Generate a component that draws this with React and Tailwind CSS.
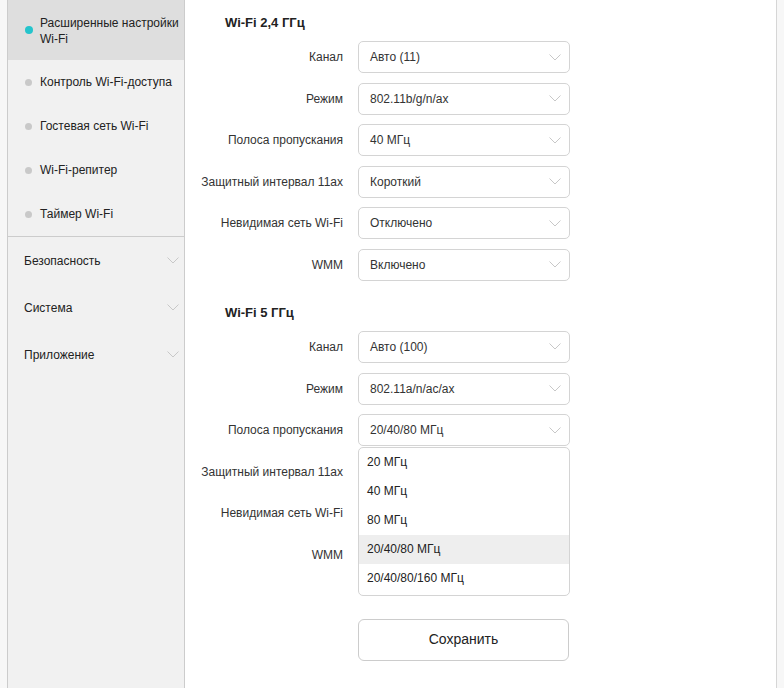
import React from "react";

const Chevron = () => (
  <svg width="12" height="7" viewBox="0 0 12 7" fill="none">
    <path d="M0.5 0.5 L6 6 L11.5 0.5" stroke="#c8c8c8" strokeWidth="1" />
  </svg>
);

const Select = ({ value }) => (
  <div className="w-[212px] h-[32px] border border-[#d4d4d4] rounded-[5px] bg-white flex items-center justify-between pl-[11px] pr-[8px] text-[12px] text-[#333]">
    <span>{value}</span>
    <Chevron />
  </div>
);

const Row = ({ label, value, first }) => (
  <div className={`flex items-center ${first ? "" : "mt-[9.6px]"}`}>
    <div className="w-[161px] text-right text-[12px] text-[#333] pr-[3px] whitespace-nowrap">{label}</div>
    <div className="ml-[12px]">
      <Select value={value} />
    </div>
  </div>
);

const SideItem = ({ label, active }) => (
  <div className={`flex pl-[17px] pr-1 ${active ? "bg-[#dedede] h-[60px] pt-[15px] items-start" : "h-[44px] items-center"}`}>
    <span
      className={`shrink-0 rounded-full ${active ? "w-[8px] h-[8px] bg-[#24c4cc] mt-[11px]" : "w-[7px] h-[7px] bg-[#c9c9c9]"}`}
    />
    <span className={`${active ? "ml-[7px]" : "ml-[8px]"} text-[12px] leading-[16px] text-[#222] whitespace-nowrap`}>{label}</span>
  </div>
);

const SideSection = ({ label }) => (
  <div className="h-[47px] flex items-center justify-between pl-[16px] pr-[5px] text-[12px] text-[#222]">
    <span>{label}</span>
    <Chevron />
  </div>
);

export default function App() {
  const font = { fontFamily: '"Liberation Sans", Arial, sans-serif' };
  return (
    <div className="w-[784px] h-[688px] flex bg-[#f7f7f7] overflow-hidden" style={font}>
      <div className="w-[7px] shrink-0" />
      <div className="w-[178px] shrink-0 bg-[#f1f1f1] border-l border-r border-[#cccccc] flex flex-col">
        <div className="h-[2px] bg-[#24c4cc]" />
        <div className="-mt-[2px]" />
        <SideItem label={<>Расширенные настройки<br />Wi-Fi</>} active />
        <SideItem label="Контроль Wi-Fi-доступа" />
        <SideItem label="Гостевая сеть Wi-Fi" />
        <SideItem label="Wi-Fi-репитер" />
        <SideItem label="Таймер Wi-Fi" />
        <div className="h-px bg-[#cccccc]" />
        <SideSection label="Безопасность" />
        <SideSection label="Система" />
        <SideSection label="Приложение" />
      </div>
      <div className="w-[591px] shrink-0 bg-white relative">
        <div className="pt-[13px]">
          <div className="pl-[40px] text-[13px] leading-[20px] font-bold text-[#222]">Wi-Fi 2,4 ГГц</div>
          <div className="mt-[8px]">
            <Row first label="Канал" value="Авто (11)" />
            <Row label="Режим" value="802.11b/g/n/ax" />
            <Row label="Полоса пропускания" value="40 МГц" />
            <Row label="Защитный интервал 11ax" value="Короткий" />
            <Row label="Невидимая сеть Wi-Fi" value="Отключено" />
            <Row label="WMM" value="Включено" />
          </div>
          <div className="mt-[22px] pl-[40px] text-[13px] leading-[20px] font-bold text-[#222]">Wi-Fi 5 ГГц</div>
          <div className="mt-[8px] relative">
            <Row first label="Канал" value="Авто (100)" />
            <Row label="Режим" value="802.11a/n/ac/ax" />
            <Row label="Полоса пропускания" value="20/40/80 МГц" />
            <Row label="Защитный интервал 11ax" value="" />
            <Row label="Невидимая сеть Wi-Fi" value="" />
            <Row label="WMM" value="" />
            <div className="absolute left-[173px] top-[116px] w-[212px] h-[149px] bg-white border border-[#d4d4d4] rounded-[5px] text-[12px] text-[#222] overflow-hidden">
              {["20 МГц", "40 МГц", "80 МГц", "20/40/80 МГц", "20/40/80/160 МГц"].map((o, i) => (
                <div key={o} className={`h-[29px] flex items-center pl-[8px] ${i === 3 ? "bg-[#eeeeee]" : ""}`}>
                  {o}
                </div>
              ))}
            </div>
          </div>
          <div className="mt-[48px] ml-[173px] w-[211px] h-[42px] border border-[#cccccc] rounded-[6px] flex items-center justify-center text-[14px] text-[#222]">
            Сохранить
          </div>
        </div>
      </div>
      <div className="w-px shrink-0 bg-[#d6d6d6]" />
      <div className="flex-1" />
    </div>
  );
}
